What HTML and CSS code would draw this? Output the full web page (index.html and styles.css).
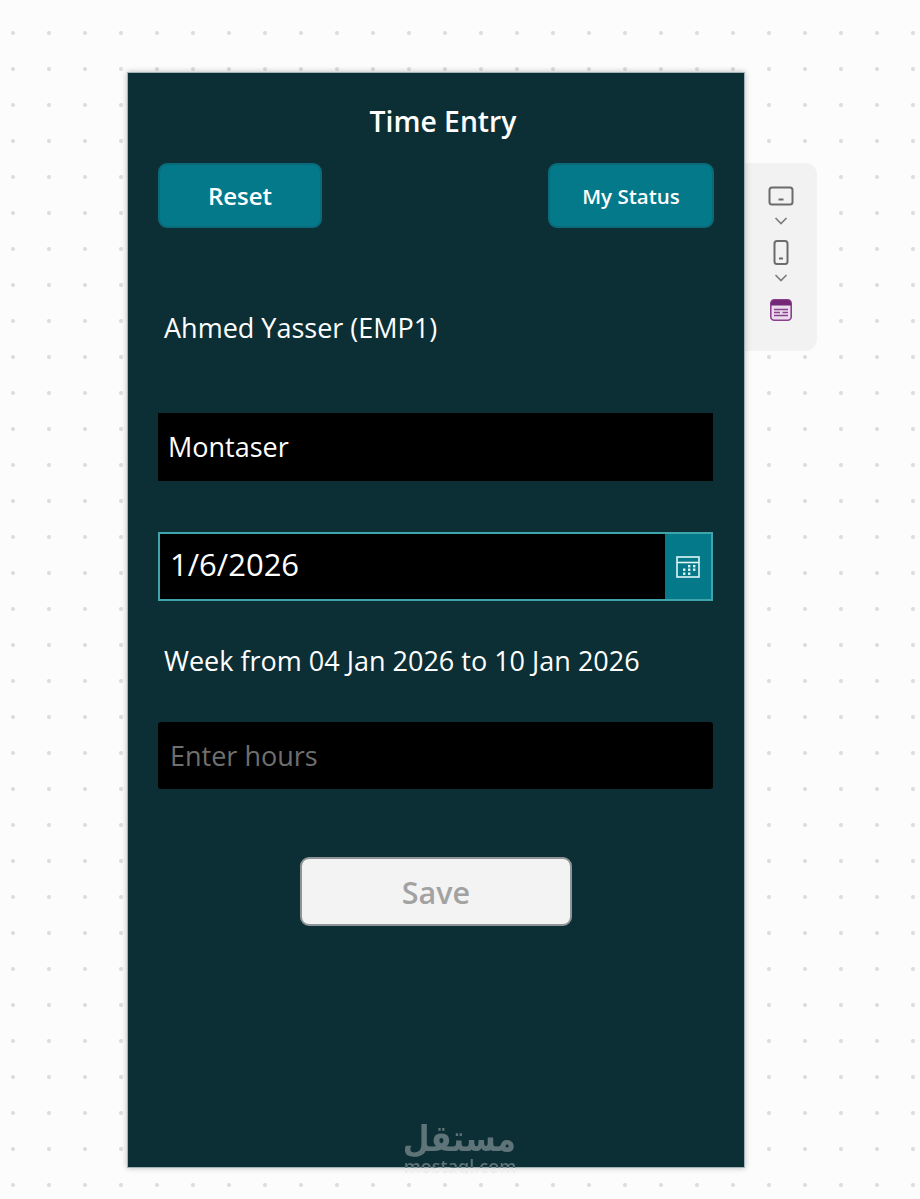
FILE: index.html
```html
<!DOCTYPE html>
<html lang="en">
<head>
    <meta charset="UTF-8">
    <meta name="viewport" content="width=device-width, initial-scale=1.0">
    <title>Time Entry</title>
    <link rel="stylesheet" href="styles.css">
</head>
<body>
    <div class="canvas">
        <div class="screen">
            <h1 class="title">Time Entry</h1>
            <div class="top-buttons">
                <button class="btn btn-reset">Reset</button>
                <button class="btn btn-status">My Status</button>
            </div>
            <div class="employee">Ahmed Yasser (EMP1)</div>
            <div class="field field-manager">Montaser</div>
            <div class="date-field">
                <div class="date-value">1/6/2026</div>
                <div class="date-icon">
                    <svg width="24" height="22" viewBox="0 0 24 22" fill="none" stroke="#dff5f6" stroke-width="1.6">
                        <rect x="1" y="1" width="22" height="20"/>
                        <path d="M1 6.5h22"/>
                        <g fill="#dff5f6" stroke="none">
                            <rect x="12" y="9" width="2.4" height="2.4"/>
                            <rect x="17" y="9" width="2.4" height="2.4"/>
                            <rect x="7" y="12.5" width="2.4" height="2.4"/>
                            <rect x="12" y="12.5" width="2.4" height="2.4"/>
                            <rect x="17" y="12.5" width="2.4" height="2.4"/>
                            <rect x="7" y="16.5" width="2.4" height="2.4"/>
                            <rect x="12" y="16.5" width="2.4" height="2.4"/>
                        </g>
                    </svg>
                </div>
            </div>
            <div class="week">Week from 04 Jan 2026 to 10 Jan 2026</div>
            <input class="field field-hours" type="text" placeholder="Enter hours">
            <div class="save-row">
                <button class="btn-save" disabled>Save</button>
            </div>
            <div class="watermark">
                <div class="watermark-ar" lang="ar" dir="rtl">مستقل</div>
                <div class="watermark-en">mostaql.com</div>
            </div>
        </div>
        <div class="side-panel">
            <svg class="monitor" width="26" height="20" viewBox="0 0 26 20" fill="none" stroke="#6b6b6b" stroke-width="2">
                <rect x="1.5" y="1.5" width="23" height="17" rx="2.5"/>
                <path d="M10.5 13.5h5"/>
            </svg>
            <svg class="chevron" width="14" height="8" viewBox="0 0 14 8" fill="none" stroke="#7d7d7d" stroke-width="1.7">
                <path d="M1.5 1l5.5 5.5L12.5 1"/>
            </svg>
            <svg class="phone" width="16" height="25" viewBox="0 0 16 25" fill="none" stroke="#6b6b6b" stroke-width="2">
                <rect x="1.5" y="1" width="13" height="23" rx="2.5"/>
                <path d="M6 18.5h4"/>
            </svg>
            <svg class="chevron" width="14" height="8" viewBox="0 0 14 8" fill="none" stroke="#7d7d7d" stroke-width="1.7">
                <path d="M1.5 1l5.5 5.5L12.5 1"/>
            </svg>
            <svg class="form-icon" width="22" height="22" viewBox="0 0 22 22">
                <rect x="0.8" y="0.8" width="20.4" height="20.4" rx="3.5" fill="#eadcec" stroke="#8a3f8f" stroke-width="1.6"/>
                <path d="M1 4.5a3.5 3.5 0 0 1 3.5-3.5h13a3.5 3.5 0 0 1 3.5 3.5V6.5H1z" fill="#742774"/>
                <path d="M4 10.5h14M4 13.5h6M12.5 13.5H18M4 16.5h14" stroke="#8a3f8f" stroke-width="1.5"/>
            </svg>
        </div>
    </div>
</body>
</html>
```
FILE: styles.css
```css
* {
    box-sizing: border-box;
}
body {
    margin: 0;
    height: 1199px;
    overflow: hidden;
    background-color: #fcfcfc;
    background-image: radial-gradient(circle at center, #dedede 0, #dedede 1.6px, transparent 2.4px);
    background-size: 36px 36px;
    background-position: -5px 15px;
    font-family: "Open Sans", sans-serif;
}
.canvas {
    display: flex;
    align-items: flex-start;
    padding: 72px 0 0 127px;
}
.screen {
    position: relative;
    width: 618px;
    height: 1096px;
    padding: 0 30px;
    background: #0c2f35;
    border: 1px solid #a3b3b5;
    box-shadow: 0 0 6px rgba(0,0,0,0.25);
    color: #fff;
}
.title {
    margin: 29px 0 0 0;
    padding-left: 14px;
    text-align: center;
    font-size: 28.3px;
    line-height: 38px;
    font-weight: 600;
}
.top-buttons {
    display: flex;
    justify-content: space-between;
    margin-top: 23px;
}
.btn {
    height: 65px;
    width: 166px;
    background: #03798a;
    color: #fff;
    border: 2px solid #0a6a79;
    border-radius: 9px;
    font-family: inherit;
    font-weight: 600;
    font-size: 24px;
}
.btn-reset {
    width: 164px;
}
.btn-status {
    font-size: 20.5px;
}
.employee {
    margin-top: 82px;
    padding-left: 6px;
    font-size: 27px;
    line-height: 36px;
}
.field {
    display: block;
    width: 555px;
    height: 68px;
    background: #000;
    color: #fff;
    border: none;
    font-family: inherit;
}
.field-manager {
    margin-top: 67px;
    padding-left: 10px;
    font-size: 27px;
    line-height: 68px;
}
.date-field {
    display: flex;
    width: 555px;
    height: 69px;
    margin-top: 51px;
    border: 2px solid #3fa5ad;
    background: #000;
}
.date-value {
    flex: 1;
    padding-left: 10px;
    font-size: 31px;
    line-height: 61px;
}
.date-icon {
    display: flex;
    align-items: center;
    justify-content: center;
    width: 46px;
    background: #03798a;
}
.week {
    margin-top: 42px;
    padding-left: 6px;
    font-size: 27px;
    line-height: 36px;
}
.field-hours {
    margin-top: 43px;
    height: 67px;
    padding-left: 12px;
    border-radius: 3px;
    font-size: 27px;
    outline: none;
}
.field-hours::placeholder {
    color: #6f6f6f;
    opacity: 1;
}
.save-row {
    display: flex;
    justify-content: center;
    margin-top: 68px;
}
.btn-save {
    width: 272px;
    height: 69px;
    background: #f4f3f3;
    color: #a3a2a2;
    border: 2px solid #8f9496;
    border-radius: 9px;
    font-family: inherit;
    font-size: 30.5px;
    font-weight: 600;
}
/* logo sits over the bottom edge of the screen */
.watermark {
    position: absolute;
    left: 267px;
    bottom: -7px;
    width: 130px;
    text-align: center;
    color: #5f7478;
}
.watermark-ar {
    font-family: "DejaVu Sans", sans-serif;
    font-weight: 700;
    font-size: 36px;
    line-height: 40px;
    transform: scaleX(0.86);
}
.watermark-en {
    margin-top: -1px;
    font-family: "Open Sans", sans-serif;
    font-size: 18px;
    line-height: 16px;
    font-weight: 600;
    background: linear-gradient(#5f7478 10px, #ececec 10px);
    -webkit-background-clip: text;
    background-clip: text;
    color: transparent;
}
.side-panel {
    display: flex;
    flex-direction: column;
    align-items: center;
    width: 73px;
    height: 188px;
    margin: 91px 0 0 -1px;
    padding-top: 23px;
    background: #f3f2f2;
    border-radius: 0 12px 12px 0;
}
.monitor {
    margin-bottom: 2px;
}
.chevron {
    margin-top: 9px;
}
.phone {
    margin-top: 15px;
}
.chevron + .form-icon {
    margin-top: 17px;
}
```
